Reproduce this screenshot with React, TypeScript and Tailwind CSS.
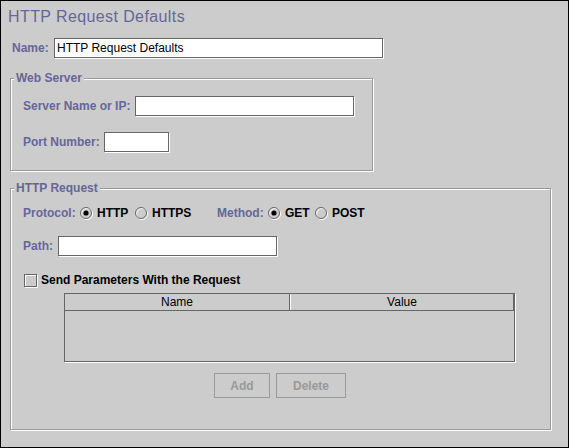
import React from 'react';

const FONT = { fontFamily: '"Liberation Sans", Arial, sans-serif' };

const Radio = ({ checked }: { checked?: boolean }) => (
  <svg width="13" height="13" viewBox="0 0 13 13" className="shrink-0">
    <circle cx="7" cy="7" r="5.5" fill="none" stroke="#ffffff" />
    <circle cx="6" cy="6" r="5.5" fill="none" stroke="#666666" />
    {checked && <circle cx="6" cy="6" r="2.6" fill="#000000" />}
  </svg>
);

const Field = ({ width, value }: { width: string; value?: string }) => (
  <div
    className={`${width} h-[20px] shrink-0 border border-[#666666] bg-white shadow-[1px_1px_0_#ffffff] pl-[2px] text-[12px] leading-[18px] text-black whitespace-nowrap overflow-hidden`}
  >
    {value}
  </div>
);

const Group = ({
  title,
  className,
  children,
}: {
  title: string;
  className: string;
  children: React.ReactNode;
}) => (
  <div
    className={`relative ml-[9px] border border-[#999999] shadow-[inset_1px_1px_0_#ffffff,1px_1px_0_#ffffff] ${className}`}
  >
    <span className="absolute left-[3px] top-[-8px] bg-[#cccccc] px-[2px] text-[12px] font-bold leading-[14px] text-[#666699]">
      {title}
    </span>
    {children}
  </div>
);

const Label = ({ width, children }: { width: string; children: React.ReactNode }) => (
  <span className={`${width} shrink-0 text-[12px] font-bold leading-[14px] text-[#666699] whitespace-nowrap`}>
    {children}
  </span>
);

const Option = ({ width, label, checked }: { width: string; label: string; checked?: boolean }) => (
  <div className={`${width} shrink-0 flex items-center gap-[4px]`}>
    <Radio checked={checked} />
    <span className="text-[12px] font-bold leading-[14px] text-black">{label}</span>
  </div>
);

export default function App() {
  return (
    <div
      className="w-[569px] h-[448px] border border-black bg-[#cccccc] overflow-hidden"
      style={FONT}
    >
      {/* Title */}
      <div className="mt-[7px] pl-[7px] h-[18px] text-[16px] leading-[18px] tracking-[0.4px] text-[#666699] whitespace-nowrap">
        HTTP Request Defaults
      </div>

      {/* Name */}
      <div className="mt-[12px] pl-[11px] flex items-center h-[20px]">
        <Label width="w-[42px]">Name:</Label>
        <Field width="w-[329px]" value="HTTP Request Defaults" />
      </div>

      {/* Web Server */}
      <div className="mt-[20px]">
        <Group title="Web Server" className="w-[363px] h-[93px] pt-[17px] pl-[12px]">
          <div className="flex items-center h-[20px]">
            <Label width="w-[112px]">Server Name or IP:</Label>
            <Field width="w-[219px]" />
          </div>
          <div className="mt-[16px] flex items-center h-[20px]">
            <Label width="w-[81px]">Port Number:</Label>
            <Field width="w-[65px]" />
          </div>
        </Group>
      </div>

      {/* HTTP Request */}
      <div className="mt-[17px]">
        <Group title="HTTP Request" className="w-[541px] h-[242px] pt-[14px] pl-[12px]">
          <div className="flex items-center h-[20px]">
            <Label width="w-[57px]">Protocol:</Label>
            <Option width="w-[55px]" label="HTTP" checked />
            <Option width="w-[82px]" label="HTTPS" />
            <Label width="w-[51px]">Method:</Label>
            <Option width="w-[47px]" label="GET" checked />
            <Option width="w-[60px]" label="POST" />
          </div>

          <div className="mt-[13px] flex items-center h-[20px]">
            <Label width="w-[35px]">Path:</Label>
            <Field width="w-[219px]" />
          </div>

          <div className="mt-[14px] flex items-center h-[20px] pl-[1px] gap-[4px]">
            <div className="w-[13px] h-[13px] shrink-0 border border-[#666666] shadow-[inset_1px_1px_0_#ffffff,1px_1px_0_#ffffff]" />
            <span className="text-[12px] font-bold leading-[14px] text-black">
              Send Parameters With the Request
            </span>
          </div>

          {/* Parameters table */}
          <div className="mt-[3px] ml-[41px] w-[451px] h-[69px] border border-[#666666] shadow-[1px_1px_0_#ffffff] flex flex-col">
            <div className="flex h-[17px] border-b border-[#666666] text-[12px] leading-[16px] text-black">
              <div className="w-[225px] border-r border-[#666666] text-center">Name</div>
              <div className="flex-1 border-l border-white border-r border-r-[#666666] text-center">Value</div>
            </div>
            <div className="flex-1" />
          </div>

          {/* Buttons */}
          <div className="mt-[11px] ml-[191px] flex gap-[6px]">
            <div className="w-[56px] h-[25px] border border-[#999999] flex items-center justify-center text-[12px] font-bold text-[#999999]">
              Add
            </div>
            <div className="w-[70px] h-[25px] border border-[#999999] flex items-center justify-center text-[12px] font-bold text-[#999999]">
              Delete
            </div>
          </div>
        </Group>
      </div>
    </div>
  );
}
